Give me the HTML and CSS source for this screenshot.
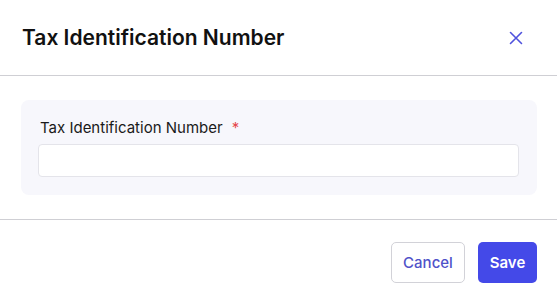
FILE: index.html
```html
<!DOCTYPE html>
<html lang="en">
<head>
    <meta charset="UTF-8">
    <meta name="viewport" content="width=device-width, initial-scale=1.0">
    <title>Tax Identification Number</title>
    <link rel="stylesheet" href="styles.css">
</head>
<body>
    <div class="modal">
        <header class="modal-header">
            <h1>Tax Identification Number</h1>
            <button class="close-btn" aria-label="Close">
                <svg width="14" height="14" viewBox="0 0 14 14" fill="none">
                    <path d="M1.5 1.5L12.5 12.5M12.5 1.5L1.5 12.5" stroke="#4f52dd" stroke-width="1.6" stroke-linecap="round"/>
                </svg>
            </button>
        </header>
        <div class="modal-body">
            <div class="field-card">
                <label for="tin">Tax Identification Number <span class="req">*</span></label>
                <input type="text" id="tin" name="tin">
            </div>
        </div>
        <footer class="modal-footer">
            <button class="btn btn-cancel">Cancel</button>
            <button class="btn btn-save">Save</button>
        </footer>
    </div>
</body>
</html>
```

FILE: styles.css
```css
body {
    margin: 0;
    background-color: #fff;
    font-family: Inter, "Noto Sans", sans-serif;
    color: #111;
}

.modal {
    width: 557px;
    height: 300px;
    display: flex;
    flex-direction: column;
}

.modal-header {
    display: flex;
    justify-content: space-between;
    align-items: center;
    padding: 23px 34px 23px 22px;
    border-bottom: 1px solid #cfcfd4;
}

.modal-header h1 {
    margin: 0;
    font-size: 21px;
    line-height: 29px;
    font-weight: 600;
    color: #111;
}

.close-btn {
    border: none;
    background: none;
    padding: 0;
    display: flex;
    cursor: pointer;
}

.modal-body {
    padding: 24px 20px 24px 21px;
    border-bottom: 1px solid #cfcfd4;
}

.field-card {
    background-color: #f7f7fc;
    border-radius: 8px;
    padding: 18px 18px 18px 17px;
    display: flex;
    flex-direction: column;
}

.field-card label {
    font-size: 15px;
    line-height: 20px;
    font-weight: 400;
    color: #1a1a1a;
    margin: 0 0 6px 2px;
}

.req {
    color: #e5484d;
    margin-left: 5px;
}

.field-card input {
    height: 33px;
    box-sizing: border-box;
    border: 1px solid #e4e4ea;
    border-radius: 4px;
    background-color: #fff;
    padding: 0 10px;
    font-size: 14px;
}

.modal-footer {
    display: flex;
    justify-content: flex-end;
    gap: 13px;
    padding: 22px 20px;
}

.btn {
    height: 41px;
    border-radius: 5px;
    font-family: Inter, "Noto Sans", sans-serif;
    font-size: 15px;
    cursor: pointer;
}

.btn-cancel {
    width: 74px;
    background-color: #fff;
    border: 1px solid #d2d2d8;
    color: #4f52c9;
    font-weight: 500;
}

.btn-save {
    width: 59px;
    background-color: #4449e8;
    border: none;
    color: #fff;
    font-weight: 600;
}
```
